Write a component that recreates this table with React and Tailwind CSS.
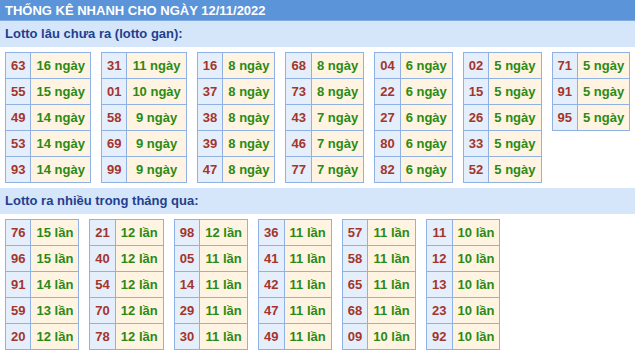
import React from 'react';

const ganTables = [
    [['63', 16], ['55', 15], ['49', 14], ['53', 14], ['93', 14]],
    [['31', 11], ['01', 10], ['58', 9], ['69', 9], ['99', 9]],
    [['16', 8], ['37', 8], ['38', 8], ['39', 8], ['47', 8]],
    [['68', 8], ['73', 8], ['43', 7], ['46', 7], ['77', 7]],
    [['04', 6], ['22', 6], ['27', 6], ['80', 6], ['82', 6]],
    [['02', 5], ['15', 5], ['26', 5], ['33', 5], ['52', 5]],
    [['71', 5], ['91', 5], ['95', 5]],
];

const hotTables = [
    [['76', 15], ['96', 15], ['91', 14], ['59', 13], ['20', 12]],
    [['21', 12], ['40', 12], ['54', 12], ['70', 12], ['78', 12]],
    [['98', 12], ['05', 11], ['14', 11], ['29', 11], ['30', 11]],
    [['36', 11], ['41', 11], ['42', 11], ['47', 11], ['49', 11]],
    [['57', 11], ['58', 11], ['65', 11], ['68', 11], ['09', 10]],
    [['11', 10], ['12', 10], ['13', 10], ['23', 10], ['92', 10]],
];

const LottoTable = ({ rows, unit }) => (
    <table className="mx-[5px] border-collapse">
        <tbody>
            {rows.map(([num, count]) => (
                <tr key={num}>
                    <td className="border border-[#8fb1e3] bg-[#e5eefb] px-[5px] py-[5px] text-center text-[13px] font-bold leading-[15px] text-[#a3352b]">
                        {num}
                    </td>
                    <td className="border border-[#8fb1e3] bg-[#fff4e2] px-[5px] py-[5px] text-center text-[13px] font-bold leading-[15px] text-[#2b8a14] whitespace-nowrap">
                        {count} {unit}
                    </td>
                </tr>
            ))}
        </tbody>
    </table>
);

const Section = ({ title, tables, unit }) => (
    <div>
        <div className="h-[26px] bg-[#d6e6fa] px-[5px] text-[13px] font-bold leading-[26px] text-[#1f3f8e]">
            {title}
        </div>
        <div className="flex items-start py-[5px]">
            {tables.map((rows, i) => (
                <LottoTable key={i} rows={rows} unit={unit} />
            ))}
        </div>
    </div>
);

export default function App() {
    return (
        <div className="w-[635px] h-[353px] overflow-hidden bg-white font-['Liberation_Sans',Arial,sans-serif]">
            <div className="h-[21px] bg-[#5b94d8] px-[5px] text-[13px] font-bold leading-[21px] text-white border-b border-[#7fabe2]">
                THỐNG KÊ NHANH CHO NGÀY 12/11/2022
            </div>
            <Section title="Lotto lâu chưa ra (lotto gan):" tables={ganTables} unit="ngày" />
            <Section title="Lotto ra nhiều trong tháng qua:" tables={hotTables} unit="lần" />
        </div>
    );
}
